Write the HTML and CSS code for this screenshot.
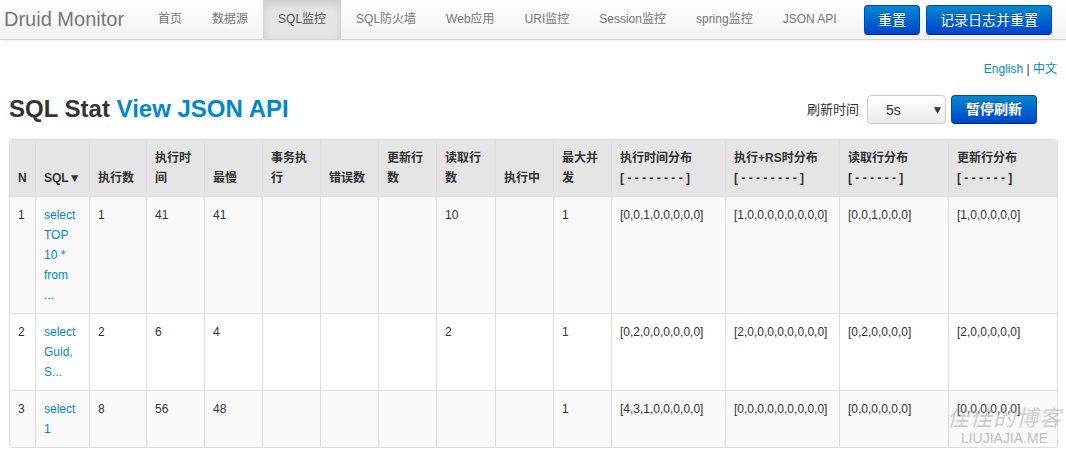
FILE: index.html
```html
<!DOCTYPE html>
<html lang="zh-CN">
<head>
    <meta charset="UTF-8">
    <title>Druid Monitor - SQL监控</title>
    <link rel="stylesheet" href="styles.css">
</head>
<body>
    <div class="navbar">
        <a class="brand" href="#">Druid Monitor</a>
        <ul class="nav">
            <li><a href="#">首页</a></li>
            <li><a href="#">数据源</a></li>
            <li class="active"><a href="#">SQL监控</a></li>
            <li><a href="#">SQL防火墙</a></li>
            <li><a href="#">Web应用</a></li>
            <li><a href="#">URI监控</a></li>
            <li><a href="#">Session监控</a></li>
            <li><a href="#">spring监控</a></li>
            <li><a href="#">JSON API</a></li>
        </ul>
        <div class="nav-actions">
            <button class="btn btn-primary">重置</button>
            <button class="btn btn-primary">记录日志并重置</button>
        </div>
    </div>

    <div class="container">
        <div class="lang">
            <a href="#">English</a> | <a href="#">中文</a>
        </div>

        <div class="title-row">
            <h2>SQL Stat <a href="#">View JSON API</a></h2>
            <div class="refresh">
                <span class="refresh-label">刷新时间</span>
                <div class="select">
                    <span>5s</span>
                    <span class="caret">▼</span>
                </div>
                <button class="btn btn-primary btn-bold">暂停刷新</button>
            </div>
        </div>

        <table class="table">
            <colgroup>
                <col style="width: 26px">
                <col style="width: 54px">
                <col style="width: 57px">
                <col style="width: 58px">
                <col style="width: 58px">
                <col style="width: 58px">
                <col style="width: 58px">
                <col style="width: 58px">
                <col style="width: 59px">
                <col style="width: 58px">
                <col style="width: 58px">
                <col style="width: 114px">
                <col style="width: 114px">
                <col style="width: 109px">
                <col style="width: 109px">
            </colgroup>
            <thead>
                <tr>
                    <th>N</th>
                    <th>SQL▼</th>
                    <th>执行数</th>
                    <th>执行时间</th>
                    <th>最慢</th>
                    <th>事务执行</th>
                    <th>错误数</th>
                    <th>更新行数</th>
                    <th>读取行数</th>
                    <th>执行中</th>
                    <th>最大并发</th>
                    <th>执行时间分布<br>[ - - - - - - - - ]</th>
                    <th>执行+RS时分布<br>[ - - - - - - - - ]</th>
                    <th>读取行分布<br>[ - - - - - - ]</th>
                    <th>更新行分布<br>[ - - - - - - ]</th>
                </tr>
            </thead>
            <tbody>
                <tr>
                    <td>1</td>
                    <td><a href="#">select TOP 10 * from ...</a></td>
                    <td>1</td>
                    <td>41</td>
                    <td>41</td>
                    <td></td>
                    <td></td>
                    <td></td>
                    <td>10</td>
                    <td></td>
                    <td>1</td>
                    <td>[0,0,1,0,0,0,0,0]</td>
                    <td>[1,0,0,0,0,0,0,0,0]</td>
                    <td>[0,0,1,0,0,0]</td>
                    <td>[1,0,0,0,0,0]</td>
                </tr>
                <tr>
                    <td>2</td>
                    <td><a href="#">select Guid, S...</a></td>
                    <td>2</td>
                    <td>6</td>
                    <td>4</td>
                    <td></td>
                    <td></td>
                    <td></td>
                    <td>2</td>
                    <td></td>
                    <td>1</td>
                    <td>[0,2,0,0,0,0,0,0]</td>
                    <td>[2,0,0,0,0,0,0,0,0]</td>
                    <td>[0,2,0,0,0,0]</td>
                    <td>[2,0,0,0,0,0]</td>
                </tr>
                <tr>
                    <td>3</td>
                    <td><a href="#">select 1</a></td>
                    <td>8</td>
                    <td>56</td>
                    <td>48</td>
                    <td></td>
                    <td></td>
                    <td></td>
                    <td></td>
                    <td></td>
                    <td>1</td>
                    <td>[4,3,1,0,0,0,0,0]</td>
                    <td>[0,0,0,0,0,0,0,0,0]</td>
                    <td>[0,0,0,0,0,0]</td>
                    <td>[0,0,0,0,0,0]</td>
                </tr>
            </tbody>
        </table>
    </div>

    <div class="watermark">
        <div class="watermark-cn">佳佳的博客</div>
        <div class="watermark-en">LIUJIAJIA.ME</div>
    </div>
</body>
</html>
```

FILE: styles.css
```css
body {
    margin: 0;
    font-family: "Liberation Sans", Arial, "Noto Sans CJK SC", sans-serif;
    font-size: 12px;
    line-height: 20px;
    color: #333;
    background-color: #fff;
    position: relative;
    min-height: 455px;
}
a {
    color: #0088cc;
    text-decoration: none;
}

/* Navbar */
.navbar {
    display: flex;
    align-items: flex-start;
    height: 39px;
    background-image: linear-gradient(to bottom, #ffffff, #f2f2f2);
    border-bottom: 1px solid #d4d4d4;
    box-shadow: 0 1px 4px rgba(0, 0, 0, 0.065);
}
.brand {
    padding: 0 19px 0 4px;
    font-size: 20px;
    line-height: 39px;
    color: #777;
}
.nav {
    display: flex;
    list-style: none;
    margin: 0;
    padding: 0;
}
.nav li a {
    display: block;
    padding: 10px 15px;
    line-height: 19px;
    color: #777;
}
.nav li.active a {
    color: #555;
    background-color: #e5e5e5;
    box-shadow: inset 0 3px 8px rgba(0, 0, 0, 0.125);
}
.nav-actions {
    display: flex;
    gap: 6px;
    margin-left: auto;
    margin-right: 14px;
    padding-top: 5px;
}

/* Buttons */
.btn {
    font-family: "Liberation Sans", Arial, "Noto Sans CJK SC", sans-serif;
    font-size: 14px;
    line-height: 20px;
    padding: 4px 13px;
    border-radius: 4px;
    cursor: pointer;
}
.btn-primary {
    color: #fff;
    text-shadow: 0 -1px 0 rgba(0, 0, 0, 0.25);
    background-image: linear-gradient(to bottom, #0088cc, #0044cc);
    border: 1px solid #0044cc;
    border-bottom-color: #002a80;
}
.btn-bold {
    font-weight: bold;
    line-height: 19px;
    padding: 4px 14px;
}

/* Content */
.container {
    padding: 19px 9px 0 9px;
}
.lang {
    text-align: right;
    color: #333;
}
.title-row {
    display: flex;
    align-items: center;
    justify-content: space-between;
    height: 60px;
}
.title-row h2 {
    margin: 0;
    font-size: 24px;
    line-height: 30px;
    font-weight: bold;
    color: #333;
}
.refresh {
    display: flex;
    align-items: center;
    margin-right: 20px;
    padding-top: 1px;
}
.refresh-label {
    font-size: 13px;
    margin-right: 8px;
    color: #333;
}
.select {
    display: flex;
    align-items: center;
    justify-content: space-between;
    box-sizing: border-box;
    width: 79px;
    height: 29px;
    padding: 0 4px 0 18px;
    margin-right: 5px;
    font-size: 14px;
    border: 1px solid #ccc;
    border-radius: 4px;
    background-image: linear-gradient(to bottom, #ffffff, #ececec);
}
.caret {
    font-family: "DejaVu Sans", sans-serif;
    font-size: 9px;
    color: #333;
}

/* Table */
.table {
    width: 100%;
    table-layout: fixed;
    border-collapse: separate;
    border-spacing: 0;
    border: 1px solid #ddd;
    border-left: 0;
    border-radius: 4px;
}
.table th,
.table td {
    padding: 8px;
    text-align: left;
    border-left: 1px solid #ddd;
    border-top: 1px solid #ddd;
    word-wrap: break-word;
}
.table thead th {
    border-top: 0;
    background-color: #e5e5e5;
    vertical-align: bottom;
    font-weight: bold;
}
.table thead th:first-child {
    border-top-left-radius: 4px;
}
.table thead th:last-child {
    border-top-right-radius: 4px;
}
.table tbody td {
    vertical-align: top;
}
.table tbody tr:nth-child(odd) td {
    background-color: #f9f9f9;
}
.table tbody tr:last-child td:first-child {
    border-bottom-left-radius: 4px;
}
.table tbody tr:last-child td:last-child {
    border-bottom-right-radius: 4px;
}

/* Watermark */
.watermark {
    position: absolute;
    right: 4px;
    bottom: 9px;
    text-align: center;
    pointer-events: none;
}
.watermark-cn {
    font-family: "Noto Sans CJK SC", sans-serif;
    font-size: 22px;
    line-height: 28px;
    font-style: italic;
    letter-spacing: 1px;
    color: rgba(150, 150, 150, 0.45);
}
.watermark-en {
    font-size: 14px;
    line-height: 16px;
    color: rgba(150, 150, 150, 0.6);
}
```
